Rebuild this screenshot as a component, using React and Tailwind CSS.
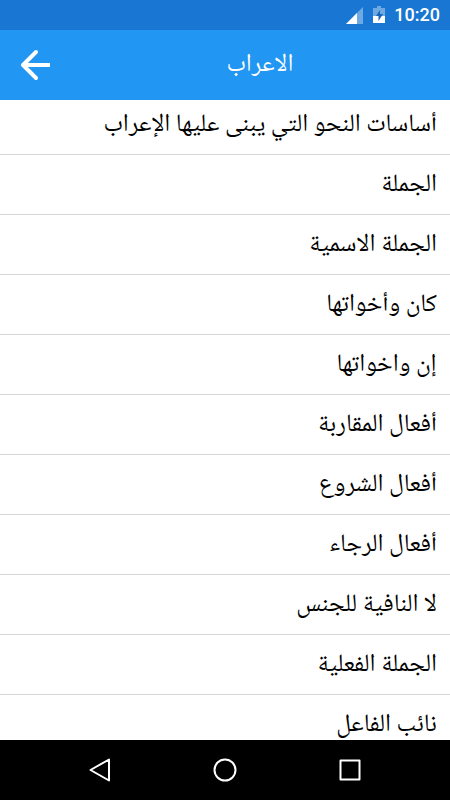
import React from "react";

const lessons = [
  "أساسات النحو التي يبنى عليها الإعراب",
  "الجملة",
  "الجملة الاسمية",
  "كان وأخواتها",
  "إن واخواتها",
  "أفعال المقاربة",
  "أفعال الشروع",
  "أفعال الرجاء",
  "لا النافية للجنس",
  "الجملة الفعلية",
  "نائب الفاعل",
];

function StatusBar() {
  return (
    <div className="flex h-[30px] shrink-0 items-center justify-end bg-[#1976d2] pr-2.5 text-white">
      <svg className="mr-2 h-5 w-5" viewBox="0 0 20 20" aria-hidden="true">
        <path d="M2 19 19 2v17z" fill="#6fa9e4" />
        <path d="M2 19 13 8v11z" fill="#fff" />
      </svg>
      <svg className="mr-2 h-5 w-3.5" viewBox="0 0 14 20" aria-hidden="true">
        <path d="M5 1h4v2h4v8H1V3h4z" fill="#6fa9e4" />
        <path d="M1 11h12v7H1z" fill="#fff" />
        <path d="M8 5 4 11h2.500v5L11 9H8z" fill="#1565b8" />
      </svg>
      <span className="font-['Roboto',sans-serif] text-lg font-medium">10:20</span>
    </div>
  );
}

function Header({ title }) {
  return (
    <header className="grid h-[70px] shrink-0 grid-cols-[70px_1fr] items-center bg-[#2196f3] text-white">
      <button type="button" aria-label="رجوع" className="flex h-full items-center justify-center">
        <svg className="h-8 w-8" viewBox="0 0 32 32" fill="none" stroke="currentColor" strokeWidth="4" aria-hidden="true">
          <path d="M31 16H5" />
          <path d="M17 3 4 16l13 13" strokeLinecap="round" strokeLinejoin="round" />
        </svg>
      </button>
      <h1 dir="rtl" className="text-center text-[25px]">
        {title}
      </h1>
    </header>
  );
}

function NavigationBar() {
  return (
    <nav className="grid h-[60px] shrink-0 grid-cols-[1fr_125px_125px_125px_1fr] bg-black text-white">
      <button type="button" aria-label="Back" className="col-start-2 flex items-center justify-center">
        <svg className="h-6 w-6" viewBox="0 0 24 24" fill="none" stroke="currentColor" strokeWidth="2" strokeLinejoin="round" aria-hidden="true">
          <path d="M21 1.500v21L2.500 12z" />
        </svg>
      </button>
      <button type="button" aria-label="Home" className="flex items-center justify-center">
        <svg className="h-6 w-6" viewBox="0 0 24 24" fill="none" stroke="currentColor" strokeWidth="2" aria-hidden="true">
          <circle cx="12" cy="12" r="10.500" />
        </svg>
      </button>
      <button type="button" aria-label="Recent apps" className="flex items-center justify-center">
        <svg className="h-6 w-6" viewBox="0 0 24 24" fill="none" stroke="currentColor" strokeWidth="2" strokeLinejoin="round" aria-hidden="true">
          <path d="M2.500 2.500h19v19h-19z" />
        </svg>
      </button>
    </nav>
  );
}

export default function App() {
  return (
    <div className="flex h-screen flex-col bg-white font-['Noto_Naskh_Arabic_UI','Noto_Naskh_Arabic','DejaVu_Sans',sans-serif]">
      <StatusBar />
      <Header title="الاعراب" />
      <main dir="rtl" className="min-h-0 flex-1 overflow-hidden">
        {/* list is scrolled a little under the header */}
        <ul className="-mt-[5px]">
          {lessons.map((lesson) => (
            <li key={lesson} className="border-b border-[#d6d6d6]">
              <button type="button" className="flex h-[59px] w-full items-center px-[13px] text-start text-[25px] text-black">
                {lesson}
              </button>
            </li>
          ))}
        </ul>
      </main>
      <NavigationBar />
    </div>
  );
}
